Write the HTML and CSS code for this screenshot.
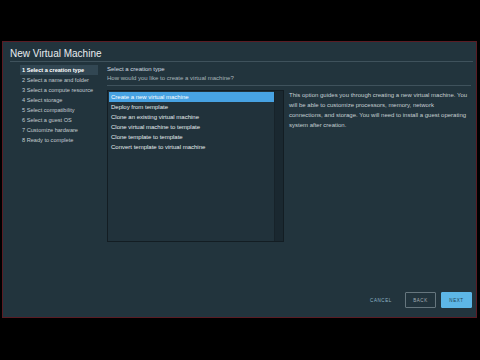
FILE: index.html
```html
<!DOCTYPE html>
<html lang="en">
<head>
  <meta charset="UTF-8" />
  <title>New Virtual Machine</title>
  <link rel="stylesheet" href="styles.css">
</head>
<body>
  <div class="dialog">
    <header class="dialog-header">New Virtual Machine</header>

    <div class="dialog-body">
      <!-- steps -->
      <ol class="steps">
        <li class="active">1 Select a creation type</li>
        <li>2 Select a name and folder</li>
        <li>3 Select a compute resource</li>
        <li>4 Select storage</li>
        <li>5 Select compatibility</li>
        <li>6 Select a guest OS</li>
        <li>7 Customize hardware</li>
        <li>8 Ready to complete</li>
      </ol>

      <main class="page">
        <div class="page-head">
          <div class="page-title">Select a creation type</div>
          <div class="page-sub">How would you like to create a virtual machine?</div>
        </div>

        <div class="page-row">
          <div class="list-box">
            <ul class="options">
              <li class="selected">Create a new virtual machine</li>
              <li>Deploy from template</li>
              <li>Clone an existing virtual machine</li>
              <li>Clone virtual machine to template</li>
              <li>Clone template to template</li>
              <li>Convert template to virtual machine</li>
            </ul>
            <div class="scroll-track"></div>
          </div>
          <p class="desc">This option guides you through creating a new virtual machine. You<br>will be able to customize processors, memory, network<br>connections, and storage. You will need to install a guest operating<br>system after creation.</p>
        </div>
      </main>
    </div>

    <footer class="dialog-footer">
      <button class="btn btn-link">CANCEL</button>
      <button class="btn btn-outline">BACK</button>
      <button class="btn btn-primary">NEXT</button>
    </footer>
  </div>
</body>
</html>
```

FILE: styles.css
```css
* {
  box-sizing: border-box;
}
html, body {
  margin: 0;
  padding: 0;
  background: #000;
  width: 480px;
  height: 360px;
  overflow: hidden;
  font-family: "Liberation Sans", Arial, sans-serif;
}

/* main dialog */
.dialog {
  margin: 41px 0 0 2px;
  width: 475px;
  height: 277px;
  border: 1px solid #5a1c24;
  background: #22343d;
  display: flex;
  flex-direction: column;
  padding: 0 3px 0 7px;
}

.dialog-header {
  color: #e8edf0;
  font-size: 10px;
  line-height: 13px;
  padding-top: 5px;
  padding-bottom: 1px;
  border-bottom: 1px solid #3f525c;
}

.dialog-body {
  flex: 1;
  display: flex;
  gap: 9px;
  padding-top: 3px;
}

/* steps list on the left */
.steps {
  list-style: none;
  margin: 0 0 0 10px;
  padding: 0;
  width: 78px;
  flex: none;
}
.steps li {
  font-size: 5.6px;
  line-height: 10px;
  height: 10px;
  padding-left: 2px;
  color: #c2cbd0;
  white-space: nowrap;
}
.steps li.active {
  background: #324753;
  color: #fff;
  font-weight: bold;
}

.page {
  flex: 1;
  display: flex;
  flex-direction: column;
}
.page-head {
  border-bottom: 1px solid #3f525c;
  padding-bottom: 2px;
  margin-right: 2px;
}
.page-title {
  font-size: 6px;
  line-height: 9px;
  color: #d4dce0;
}
.page-sub {
  font-size: 6px;
  line-height: 9px;
  color: #a9b5bb;
}

.page-row {
  display: flex;
  gap: 5px;
  margin-top: 4px;
}

/* options list box */
.list-box {
  width: 177px;
  height: 152px;
  border: 1px solid #131d23;
  background: #21323b;
  display: flex;
  flex: none;
}
.options {
  list-style: none;
  margin: 0;
  padding: 1px 0 0 1px;
  flex: 1;
}
.options li {
  font-size: 6px;
  line-height: 10px;
  height: 10px;
  padding-left: 2px;
  color: #e6ebee;
  white-space: nowrap;
}
.options li.selected {
  background: #47a2e2;
  color: #fff;
}
.scroll-track {
  width: 9px;
  background: #1a2830;
  border-left: 1px solid #17232a;
}

.desc {
  margin: 0;
  width: 184px;
  font-size: 6px;
  line-height: 10px;
  color: #c6cfd3;
}

/* buttons */
.dialog-footer {
  display: flex;
  justify-content: flex-end;
  align-items: center;
  gap: 5px;
  padding: 0 1px 9px 0;
}
.btn {
  font-family: "Liberation Sans", Arial, sans-serif;
  font-size: 4.5px;
  letter-spacing: 0.6px;
  height: 16px;
  border-radius: 1px;
  padding: 0;
  cursor: pointer;
}
.btn-link {
  background: none;
  border: none;
  color: #8fb4c8;
  width: 34px;
  margin-right: 2px;
}
.btn-outline {
  background: none;
  border: 1px solid #66767e;
  color: #a4afb5;
  width: 31px;
}
.btn-primary {
  background: #5db6e6;
  border: 1px solid #5db6e6;
  color: #1d3e52;
  width: 31px;
}
```
